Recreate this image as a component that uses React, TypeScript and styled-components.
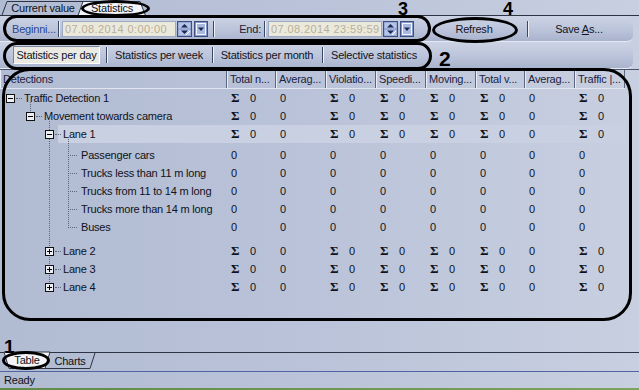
import styled, { createGlobalStyle, css } from 'styled-components'

const GlobalStyle = createGlobalStyle`
  html, body { margin: 0; padding: 0; }
  body {
    font-family: 'Liberation Sans', Arial, sans-serif;
    font-size: 11px;
    letter-spacing: -0.2px;
    color: #0e1220;
  }
`

const COLS = '227px 49px 50px 50px 50px 50px 49px 50px 50px'

const Window = styled.div`
  position: relative;
  width: 639px;
  height: 390px;
  overflow: hidden;
  display: flex;
  flex-direction: column;
  background: linear-gradient(to right, #b1bbd2 0%, #bac3d9 50%, #c8cfe0 100%);
`

const TabStrip = styled.div`
  flex: none;
  height: 15px;
  display: flex;
  align-items: flex-end;
  padding-left: 2px;
  border-bottom: 1px solid #2c3446;
`

const Tab = styled.div<{ $width: number; $active?: boolean }>`
  position: relative;
  width: ${p => p.$width}px;
  height: 14px;
  display: flex;
  align-items: center;
  justify-content: center;
  z-index: ${p => (p.$active ? 2 : 1)};
  & + & {
    margin-left: -6px;
  }
  & > span {
    position: relative;
  }
`

const TabShape = styled.svg`
  position: absolute;
  left: 0;
  top: 0;
  overflow: visible;
`

const Toolbar = styled.div<{ $height: number; $pad: number }>`
  flex: none;
  box-sizing: border-box;
  height: ${p => p.$height}px;
  margin-right: 6px;
  padding-left: ${p => p.$pad}px;
  display: flex;
  align-items: center;
  background: linear-gradient(to bottom, #ccd3e4 0%, #bbc4da 55%, #a9b3cc 100%);
  border-radius: 0 6px 6px 0;
  border-bottom: 1px solid #e4e8f1;
`

const FieldLabel = styled.span<{ $width: number; $right?: boolean; $blue?: boolean }>`
  width: ${p => p.$width}px;
  text-align: ${p => (p.$right ? 'right' : 'left')};
  padding-right: ${p => (p.$right ? 1 : 0)}px;
  box-sizing: border-box;
  color: ${p => (p.$blue ? '#2c4590' : '#1c2238')};
  white-space: nowrap;
`

const Sep = styled.span<{ $l: number; $r: number }>`
  flex: none;
  width: 1px;
  height: 16px;
  margin: 0 ${p => p.$r}px 0 ${p => p.$l}px;
  background: #3c4862;
  box-shadow: 1px 0 0 #eef1f7;
`

const DateInput = styled.div`
  flex: none;
  box-sizing: border-box;
  width: 114px;
  height: 16px;
  padding-left: 2px;
  border: 1px solid #9ea9c2;
  background: #ebe9dc;
  color: #b7af98;
  line-height: 14px;
  letter-spacing: 0.4px;
  white-space: nowrap;
  overflow: hidden;
`

const IconButton = styled.svg<{ $ml: number }>`
  flex: none;
  display: block;
  margin-left: ${p => p.$ml}px;
`

const ToolButton = styled.div<{ $width: number; $ml?: number; $pressed?: boolean }>`
  flex: none;
  box-sizing: border-box;
  width: ${p => p.$width}px;
  height: 18px;
  margin-left: ${p => p.$ml ?? 0}px;
  display: flex;
  align-items: center;
  justify-content: center;
  white-space: nowrap;
  color: #10141f;
  ${p =>
    p.$pressed &&
    css`
      background: #ebeae2;
      border: 1px solid;
      border-color: #7a849c #ffffff #ffffff #7a849c;
    `}
  & u {
    text-decoration: underline;
  }
`

const TableArea = styled.div`
  flex: 1;
  position: relative;
  border-top: 1px solid #4a5268;
  display: flex;
  flex-direction: column;
`

const HeaderRow = styled.div`
  display: grid;
  grid-template-columns: ${COLS};
  width: 625px;
  height: 19px;
  box-sizing: border-box;
  border-bottom: 1px solid #e0e5ef;
  border-right: 1px solid #e0e5ef;
`

const HeaderCell = styled.div`
  padding-left: 3px;
  line-height: 18px;
  white-space: nowrap;
  overflow: hidden;
  color: #1a2240;
  border-right: 1px solid #5c667e;
  box-shadow: inset 1px 0 0 #e8ecf4;
`

const Body = styled.div`
  position: relative;
  width: 625px;
`

const Row = styled.div<{ $highlight?: boolean }>`
  display: grid;
  grid-template-columns: ${COLS};
  height: 18px;
  align-items: center;
  white-space: nowrap;
  ${p =>
    p.$highlight &&
    css`
      background: linear-gradient(to right, transparent 58px, #c9d0e2 58px);
    `}
`

const LeafGroup = styled.div`
  padding: 3px 0 6px;
`

const TreeCell = styled.div<{ $indent: number }>`
  display: flex;
  align-items: center;
  padding-left: ${p => p.$indent}px;
  color: #0e1220;
`

const Expander = styled.span<{ $open: boolean }>`
  position: relative;
  flex: none;
  box-sizing: border-box;
  width: 9px;
  height: 9px;
  border: 1px solid #111;
  background: #eceef4;
  &::before {
    content: '';
    position: absolute;
    left: 1px;
    right: 1px;
    top: 3px;
    height: 1px;
    background: #000;
  }
  &::after {
    content: '';
    display: ${p => (p.$open ? 'none' : 'block')};
    position: absolute;
    top: 1px;
    bottom: 1px;
    left: 3px;
    width: 1px;
    background: #000;
  }
`

const Connector = styled.span<{ $width: number; $mr: number }>`
  flex: none;
  width: ${p => p.$width}px;
  height: 0;
  margin: 0 ${p => p.$mr}px 0 1px;
  border-top: 1px dotted #5c6478;
`

const TreeLines = styled.svg`
  position: absolute;
  left: 0;
  top: 0;
  pointer-events: none;
`

const ValueCell = styled.div`
  padding-left: 4px;
`

const SigmaCell = styled.div`
  display: flex;
  align-items: center;
  padding-left: 4px;
  & b {
    width: 19px;
    font-family: 'Liberation Serif', 'Times New Roman', serif;
    font-size: 13px;
    font-weight: bold;
  }
`

const BottomTabs = styled.div`
  flex: none;
  height: 18px;
  display: flex;
  align-items: flex-start;
  padding-left: 4px;
  border-top: 1px solid #2c3446;
  border-bottom: 1px solid #4f65a0;
`

const BottomTab = styled.div<{ $width: number; $active?: boolean }>`
  position: relative;
  width: ${p => p.$width}px;
  height: 16px;
  margin-top: ${p => (p.$active ? -1 : 0)}px;
  display: flex;
  align-items: center;
  justify-content: center;
  z-index: ${p => (p.$active ? 2 : 1)};
  & + & {
    margin-left: -5px;
  }
  & > span {
    position: relative;
  }
`

const StatusBar = styled.div`
  flex: none;
  height: 16px;
  line-height: 16px;
  padding-left: 4px;
  color: #0e1220;
`

const DesktopEdge = styled.div`
  flex: none;
  height: 2px;
  background: linear-gradient(to right, #5f8a48, #7ea35c);
`

const Mark = styled.div<{ $x: number; $y: number; $w: number; $h: number; $r: string }>`
  position: absolute;
  left: ${p => p.$x}px;
  top: ${p => p.$y}px;
  width: ${p => p.$w}px;
  height: ${p => p.$h}px;
  box-sizing: border-box;
  border: 3px solid #000;
  border-radius: ${p => p.$r};
  pointer-events: none;
  z-index: 5;
`

const Callout = styled.span<{ $x: number; $y: number; $size: number }>`
  position: absolute;
  left: ${p => p.$x}px;
  top: ${p => p.$y}px;
  font-size: ${p => p.$size}px;
  line-height: 1;
  font-weight: bold;
  letter-spacing: 0;
  color: #000;
  z-index: 6;
`

function SpinButton({ ml }: { ml: number }) {
  return (
    <IconButton $ml={ml} width='15' height='16' viewBox='0 0 15 16'>
      <rect x='0.5' y='0.5' width='14' height='15' fill='#7f93c4' stroke='#3f4f86' />
      <rect x='1.5' y='1.5' width='12' height='6' fill='#b5c3e5' />
      <rect x='1.5' y='8.5' width='12' height='6' fill='#b5c3e5' />
      <path d='M4 6.5 L7.5 3 L11 6.5Z' fill='#1c2858' />
      <path d='M4 9.5 L7.5 13 L11 9.5Z' fill='#1c2858' />
      <path d='M9 14 L13 10' stroke='#ffffff' strokeWidth='1' />
    </IconButton>
  )
}

function DropButton({ ml }: { ml: number }) {
  return (
    <IconButton $ml={ml} width='14' height='16' viewBox='0 0 14 16'>
      <rect x='0.5' y='0.5' width='13' height='15' fill='#8598c8' stroke='#3f4f86' />
      <rect x='2.5' y='2.5' width='9' height='11' fill='#a9b8df' stroke='#f4f6fb' />
      <path d='M4 6.5 L10 6.5 L7 10Z' fill='#1c2858' />
    </IconButton>
  )
}

type TreeRow = {
  label: string
  indent: number
  open?: boolean
  highlight?: boolean
}

const sigmaPattern = [true, false, true, true, true, true, false, true]
const headers = [
  'Detections',
  'Total n...',
  'Averag...',
  'Violatio...',
  'Speedi...',
  'Moving...',
  'Total v...',
  'Averag...',
  'Traffic |...',
]

const groupRows: TreeRow[] = [
  { label: 'Traffic Detection 1', indent: 6, open: true },
  { label: 'Movement towards camera', indent: 26, open: true },
  { label: 'Lane 1', indent: 45, open: true, highlight: true },
]
const leaves = [
  'Passenger cars',
  'Trucks less than 11 m long',
  'Trucks from 11 to 14 m long',
  'Trucks more than 14 m long',
  'Buses',
]
const closedLanes: TreeRow[] = [
  { label: 'Lane 2', indent: 45 },
  { label: 'Lane 3', indent: 45 },
  { label: 'Lane 4', indent: 45 },
]

function GroupRow({ row }: { row: TreeRow }) {
  return (
    <Row $highlight={row.highlight}>
      <TreeCell $indent={row.indent}>
        <Expander $open={!!row.open} />
        <Connector $width={6} $mr={2} />
        <span>{row.label}</span>
      </TreeCell>
      {sigmaPattern.map((s, i) =>
        s ? (
          <SigmaCell key={i}>
            <b>Σ</b>0
          </SigmaCell>
        ) : (
          <ValueCell key={i}>0</ValueCell>
        )
      )}
    </Row>
  )
}

function LeafRow({ label }: { label: string }) {
  return (
    <Row>
      <TreeCell $indent={67}>
        <Connector $width={9} $mr={4} />
        <span>{label}</span>
      </TreeCell>
      {sigmaPattern.map((_, i) => (
        <ValueCell key={i}>0</ValueCell>
      ))}
    </Row>
  )
}

export default function App() {
  return (
    <>
      <GlobalStyle />
      <Window>
        <TabStrip>
          <Tab $width={82}>
            <TabShape width='82' height='14'>
              <polyline points='0,14 5,0.5 82,0.5' fill='none' stroke='#2c3446' />
            </TabShape>
            <span>Current value</span>
          </Tab>
          <Tab $width={68} $active>
            <TabShape width='68' height='14'>
              <polygon points='0,14.5 5,0.5 62,0.5 67.5,14.5' fill='#f3f4f8' stroke='#2c3446' />
            </TabShape>
            <span>Statistics</span>
          </Tab>
        </TabStrip>

        <Toolbar $height={26} $pad={12}>
          <FieldLabel $width={44} $blue>
            Beginni...
          </FieldLabel>
          <Sep $l={2} $r={3} />
          <DateInput>07.08.2014 0:00:00</DateInput>
          <SpinButton ml={1} />
          <DropButton ml={2} />
          <Sep $l={5} $r={2} />
          <FieldLabel $width={46} $right>
            End:
          </FieldLabel>
          <Sep $l={2} $r={3} />
          <DateInput>07.08.2014 23:59:59</DateInput>
          <SpinButton ml={1} />
          <DropButton ml={2} />
          <ToolButton $width={70} $ml={25}>
            Refresh
          </ToolButton>
          <Sep $l={18} $r={10} />
          <ToolButton $width={82}>
            <span>
              Save <u>A</u>s...
            </span>
          </ToolButton>
        </Toolbar>

        <Toolbar $height={27} $pad={13}>
          <ToolButton $width={87} $pressed>
            Statistics per day
          </ToolButton>
          <Sep $l={6} $r={4} />
          <ToolButton $width={96}>Statistics per week</ToolButton>
          <Sep $l={5} $r={4} />
          <ToolButton $width={100}>Statistics per month</ToolButton>
          <Sep $l={5} $r={4} />
          <ToolButton $width={94}>Selective statistics</ToolButton>
        </Toolbar>

        <TableArea>
          <HeaderRow>
            {headers.map((h, i) => (
              <HeaderCell key={i}>{h}</HeaderCell>
            ))}
          </HeaderRow>
          <Body>
            <TreeLines width='227' height='210'>
              <g stroke='#5c6478' strokeWidth='1' strokeDasharray='1 1'>
                <line x1='30.5' y1='13' x2='30.5' y2='23' />
                <line x1='49.5' y1='32' x2='49.5' y2='193' />
                <line x1='68.5' y1='50' x2='68.5' y2='138' />
              </g>
            </TreeLines>
            {groupRows.map(r => (
              <GroupRow key={r.label} row={r} />
            ))}
            <LeafGroup>
              {leaves.map(l => (
                <LeafRow key={l} label={l} />
              ))}
            </LeafGroup>
            {closedLanes.map(r => (
              <GroupRow key={r.label} row={r} />
            ))}
          </Body>
        </TableArea>

        <BottomTabs>
          <BottomTab $width={46} $active>
            <TabShape width='46' height='17'>
              <polygon points='0,0 5,16.5 41,16.5 46,0' fill='#f3f4f8' stroke='#2c3446' />
            </TabShape>
            <span>Table</span>
          </BottomTab>
          <BottomTab $width={50}>
            <TabShape width='50' height='16'>
              <polyline points='0,15.5 45,15.5 50,0' fill='none' stroke='#2c3446' />
            </TabShape>
            <span>Charts</span>
          </BottomTab>
        </BottomTabs>

        <StatusBar>Ready</StatusBar>
        <DesktopEdge />

        <Mark $x={81} $y={0} $w={69} $h={17} $r='50%' />
        <Mark $x={3} $y={15} $w={428} $h={27} $r='14px' />
        <Mark $x={432} $y={17} $w={86} $h={26} $r='50%' />
        <Mark $x={3} $y={42} $w={429} $h={28} $r='14px' />
        <Mark $x={2} $y={68} $w={630} $h={253} $r='28px' />
        <Mark $x={2} $y={351} $w={48} $h={19} $r='50%' />

        <Callout $x={398} $y={0} $size={18}>
          3
        </Callout>
        <Callout $x={503} $y={0} $size={18}>
          4
        </Callout>
        <Callout $x={439} $y={48} $size={21}>
          2
        </Callout>
        <Callout $x={4} $y={337} $size={19}>
          1
        </Callout>
      </Window>
    </>
  )
}
